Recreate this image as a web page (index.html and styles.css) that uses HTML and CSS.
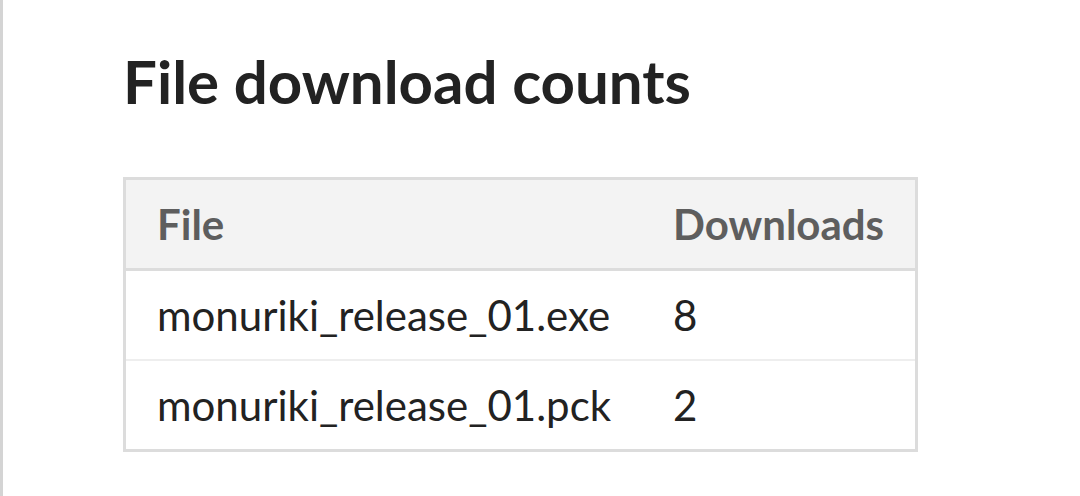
FILE: index.html
```html
<!DOCTYPE html>
<html>
<head>
<meta charset="utf-8">
<link rel="stylesheet" href="styles.css">
</head>
<body>
<div class="page">
  <h1 class="title">File download counts</h1>
  <table class="counts">
    <thead>
      <tr><th>File</th><th>Downloads</th></tr>
    </thead>
    <tbody>
      <tr><td>monuriki_release_01.exe</td><td>8</td></tr>
      <tr><td>monuriki_release_01.pck</td><td>2</td></tr>
    </tbody>
  </table>
</div>
</body>
</html>
```
FILE: styles.css
```css
html, body {
  margin: 0;
  padding: 0;
  background: #ffffff;
}
.page {
  font-family: Lato, "Liberation Sans", sans-serif;
  border-left: 3px solid #d4d4d4;
  min-height: 496px;
  box-sizing: border-box;
  padding: 48px 0 0 120px;
}
.title {
  margin: 0 0 63px 0;
  font-size: 60px;
  font-weight: 700;
  color: #222222;
  line-height: 66px;
}
.counts {
  border-collapse: separate;
  border-spacing: 0;
  border: 3px solid #dcdcdc;
  font-size: 42px;
  color: #222222;
}
.counts th {
  background: #f3f3f3;
  color: #5e5e5e;
  font-weight: 700;
  text-align: left;
  line-height: 87px;
  padding: 1px 31px 0;
  border-bottom: 3px solid #dcdcdc;
}
.counts td {
  line-height: 87px;
  padding: 1px 31px 0;
  font-weight: 400;
}
.counts tbody tr + tr td {
  border-top: 2px solid #eeeeee;
}
.counts th:first-child, .counts td:first-child {
  width: 454px;
}
```
